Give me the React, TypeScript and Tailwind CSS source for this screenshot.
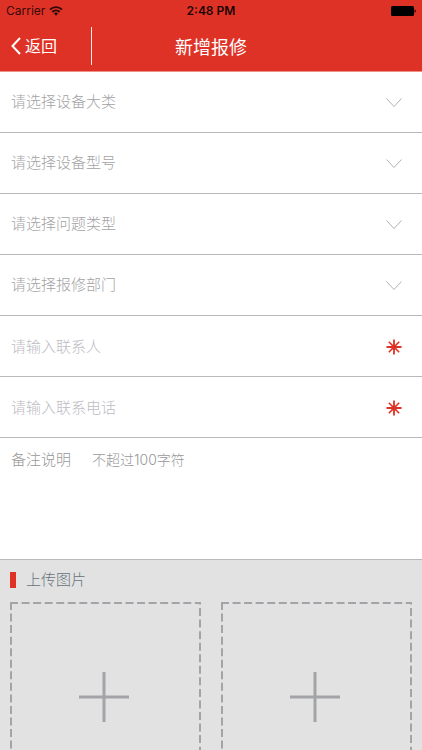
import React, { useState } from 'react';

const selects = [
  { id: 'category', label: '请选择设备大类' },
  { id: 'model', label: '请选择设备型号' },
  { id: 'problem', label: '请选择问题类型' },
  { id: 'department', label: '请选择报修部门' },
];

const inputs = [
  { id: 'contact', label: '请输入联系人', type: 'text' },
  { id: 'phone', label: '请输入联系电话', type: 'tel' },
];

function StatusBar() {
  return (
    <div className="grid h-5 grid-cols-3 items-center px-1.5 pt-0.5 text-black/80">
      <div className="flex items-center gap-1 text-xs">
        <span>Carrier</span>
        <svg className="h-[10px] w-[14px]" viewBox="0 0 14 10" fill="none" stroke="currentColor" strokeWidth="1.9">
          <path d="M1 3.6a8.6 8.6 0 0 1 12 0" />
          <path d="M3.3 6a5.3 5.3 0 0 1 7.4 0" />
          <path d="M7 9.8 4.9 7.6a3 3 0 0 1 4.2 0Z" fill="currentColor" stroke="none" />
        </svg>
      </div>
      <span className="text-center text-xs font-semibold text-black/90">2:48 PM</span>
      <svg className="h-[10px] w-[25px] justify-self-end" viewBox="0 0 25 10">
        <rect width="23" height="10" rx="1.5" fill="#000" />
        <path d="M23.5 3.5q1.5 0 1.5 1.5t-1.5 1.5z" fill="#300" />
      </svg>
    </div>
  );
}

function Header() {
  return (
    <header className="shrink-0 border-b border-[#ee8f88] bg-[#de3226]">
      <StatusBar />
      <div className="grid h-[51px] grid-cols-[92px_1fr_92px] items-center text-white">
        <button type="button" className="flex h-[38px] items-center gap-1 border-r border-white/90 pl-[11px] text-base">
          <svg className="h-[18px] w-[10px]" viewBox="0 0 10 18" fill="none" stroke="currentColor" strokeWidth="2">
            <path d="M9 1 1.5 9 9 17" />
          </svg>
          返回
        </button>
        <h1 className="pt-1 text-center text-lg">新增报修</h1>
      </div>
    </header>
  );
}

function Asterisk() {
  return (
    <svg className="h-4 w-4 shrink-0 text-[#de3226]" viewBox="0 0 16 16" fill="none" stroke="currentColor">
      <path d="M8 .5v15M.5 8h15" strokeWidth="1.8" />
      <path d="m2.8 2.8 10.4 10.4M13.2 2.8 2.8 13.2" strokeWidth="1.6" />
      <circle cx="8" cy="8" r="2.6" fill="currentColor" stroke="none" />
    </svg>
  );
}

function UploadBox({ label }: { label: string }) {
  return (
    <button type="button" aria-label={label} className="relative flex aspect-square items-center justify-center pr-1 pb-0.5 text-[#a3a4a7]">
      <svg className="absolute inset-0 h-full w-full" viewBox="0 0 191 191" fill="none" stroke="currentColor" strokeWidth="2">
        <path d="M0 1h191" strokeDasharray="8 3.55" />
        <path d="M190 0v191" strokeDasharray="8 3.55" strokeDashoffset="5.5" />
        <path d="M1 191V0" strokeDasharray="8 3.55" strokeDashoffset="1.8" />
        <path d="M1 190h190" strokeDasharray="8 3.55" />
      </svg>
      <svg className="h-[50px] w-[50px]" viewBox="0 0 50 50" stroke="currentColor" strokeWidth="3">
        <path d="M25 0v50M0 25h50" />
      </svg>
    </button>
  );
}

export default function App() {
  const [values, setValues] = useState<Record<string, string>>({});

  const update = (id: string, value: string) => {
    setValues((prev) => ({ ...prev, [id]: value }));
  };

  return (
    <div className="flex h-screen flex-col overflow-hidden bg-white font-['Inter','Noto_Sans_CJK_SC',sans-serif]">
      <Header />
      <form className="flex min-h-0 flex-1 flex-col overflow-y-auto [scrollbar-width:none]">
        {selects.map((item) => (
          <div key={item.id} className="flex h-[61px] shrink-0 items-center border-b border-[#b9b9bb] pt-px pr-5 pl-[11px]">
            <select
              aria-label={item.label}
              value={values[item.id] ?? ''}
              onChange={(e) => update(item.id, e.target.value)}
              className="h-full min-w-0 flex-1 appearance-none bg-transparent text-[15px] font-light text-[#a3a3a5] outline-none"
            >
              <option value="">{item.label}</option>
            </select>
            <svg className="h-[9px] w-4 shrink-0 text-[#b0b0b0]" viewBox="0 0 16 9" fill="none" stroke="currentColor">
              <path d="m.5.5 7.5 8 7.5-8" />
            </svg>
          </div>
        ))}

        {inputs.map((item) => (
          <div key={item.id} className="flex h-[61px] shrink-0 items-center border-b border-[#b9b9bb] pt-px pr-5 pl-[11px]">
            <input
              type={item.type}
              aria-label={item.label}
              placeholder={item.label}
              value={values[item.id] ?? ''}
              onChange={(e) => update(item.id, e.target.value)}
              className="h-full min-w-0 flex-1 text-[15px] font-light text-gray-700 outline-none placeholder:text-[#bcbcc3]"
            />
            <Asterisk />
          </div>
        ))}

        <div className="flex h-[122px] shrink-0 border-b border-[#b9b9bb] pt-2.5 pr-5 pl-[11px] font-light">
          <label htmlFor="remark" className="w-[81px] shrink-0 text-[15px] leading-6 text-[#989898]">
            备注说明
          </label>
          <textarea
            id="remark"
            maxLength={100}
            placeholder="不超过100字符"
            value={values.remark ?? ''}
            onChange={(e) => update('remark', e.target.value)}
            className="min-w-0 flex-1 resize-none text-sm leading-6 text-gray-700 outline-none placeholder:text-[#989898]"
          />
        </div>

        <section className="flex-1 bg-[#e2e2e2] px-2.5 pt-2 pb-5">
          <h2 className="mb-2.5 flex h-6 items-center gap-2.5 text-[15px] font-light text-[#67727c]">
            <span className="h-4 w-[6px] bg-[#de3226]" />
            上传图片
          </h2>
          <div className="grid grid-cols-2 gap-5">
            <UploadBox label="上传第一张图片" />
            <UploadBox label="上传第二张图片" />
          </div>
        </section>
      </form>
    </div>
  );
}
